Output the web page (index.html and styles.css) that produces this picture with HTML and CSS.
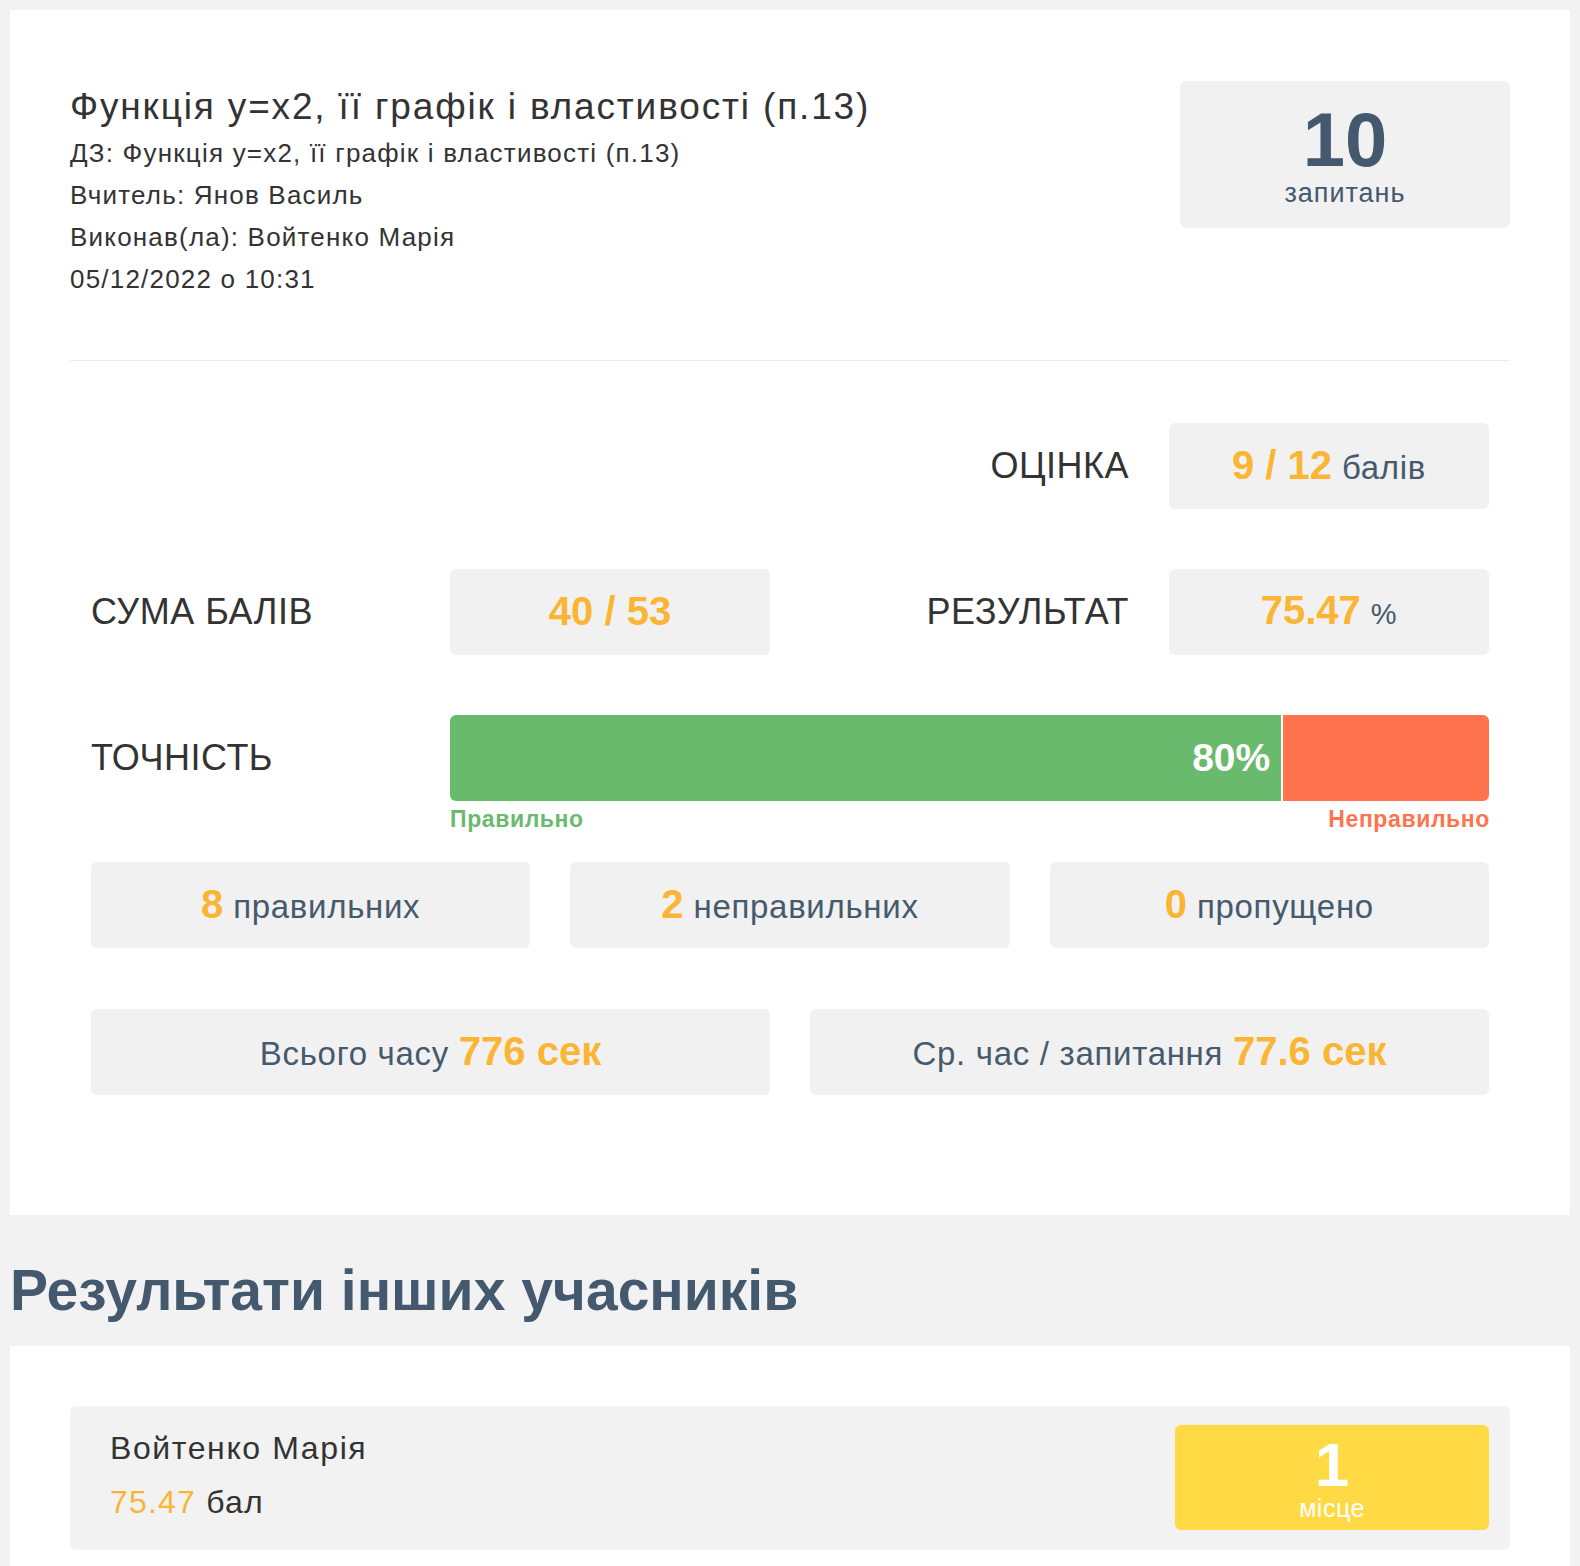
FILE: index.html
```html
<!DOCTYPE html>
<html lang="uk">
<head>
<meta charset="utf-8">
<title>Результат</title>
<link rel="stylesheet" href="styles.css">
</head>
<body>
<div class="card main-card">
  <div class="header">
    <div class="info">
      <h1 class="title">Функція y=x2, її графік і властивості (п.13)</h1>
      <div class="line">ДЗ: Функція y=x2, її графік і властивості (п.13)</div>
      <div class="line">Вчитель: Янов Василь</div>
      <div class="line">Виконав(ла): Войтенко Марія</div>
      <div class="line">05/12/2022 о 10:31</div>
    </div>
    <div class="qbox">
      <div class="qnum">10</div>
      <div class="qlabel">запитань</div>
    </div>
  </div>
  <div class="sep"></div>

  <div class="stats">
    <div class="grid">
      <div class="label right c3">ОЦІНКА</div>
      <div class="box c4"><div class="box-text"><span class="num">9 / 12</span> <span class="unit">балів</span></div></div>

      <div class="label c1">СУМА БАЛІВ</div>
      <div class="box c2"><div class="box-text"><span class="num">40 / 53</span></div></div>
      <div class="label right c3">РЕЗУЛЬТАТ</div>
      <div class="box c4"><div class="box-text"><span class="num">75.47</span> <span class="unit small">%</span></div></div>

      <div class="label c1">ТОЧНІСТЬ</div>
      <div class="barcell">
        <div class="bar">
          <div class="bar-ok" style="width:80%"><span>80%</span></div>
          <div class="bar-bad"></div>
        </div>
        <div class="bar-legend">
          <span class="ok">Правильно</span>
          <span class="bad">Неправильно</span>
        </div>
      </div>
    </div>

    <div class="row3">
      <div class="box"><div class="box-text"><span class="num">8</span> <span class="unit">правильних</span></div></div>
      <div class="box"><div class="box-text"><span class="num">2</span> <span class="unit">неправильних</span></div></div>
      <div class="box"><div class="box-text"><span class="num">0</span> <span class="unit">пропущено</span></div></div>
    </div>

    <div class="row2">
      <div class="box"><div class="box-text"><span class="unit">Всього часу</span> <span class="num">776 сек</span></div></div>
      <div class="box"><div class="box-text"><span class="unit">Ср. час / запитання</span> <span class="num">77.6 сек</span></div></div>
    </div>
  </div>
</div>

<h2 class="section-title">Результати інших учасників</h2>

<div class="card list-card">
  <div class="participant">
    <div class="p-info">
      <div class="p-name">Войтенко Марія</div>
      <div class="p-score"><span class="p-val">75.47</span> бал</div>
    </div>
    <div class="place">
      <div class="place-num">1</div>
      <div class="place-label">місце</div>
    </div>
  </div>
</div>
</body>
</html>
```

FILE: styles.css
```css
* { box-sizing: border-box; }

body {
  margin: 0;
  padding: 10px;
  background: #f2f2f2;
  font-family: "Liberation Sans", Arial, Helvetica, sans-serif;
  color: #333333;
}

.card {
  background: #ffffff;
}

.main-card {
  padding: 71px 60px 120px;
}

.header {
  display: flex;
  justify-content: space-between;
  align-items: flex-start;
}

.title {
  margin: 4px 0 4px;
  font-size: 37px;
  line-height: 43px;
  letter-spacing: 1.85px;
  font-weight: normal;
  color: #333333;
}

.line {
  font-size: 26px;
  line-height: 42px;
  letter-spacing: 1.2px;
  color: #333333;
}

.qbox {
  width: 330px;
  height: 147px;
  padding-top: 6px;
  background: #f1f1f1;
  border-radius: 6px;
  display: flex;
  flex-direction: column;
  align-items: center;
  justify-content: center;
  color: #44596e;
}

.qnum {
  font-size: 76px;
  font-weight: bold;
  line-height: 70px;
}

.qlabel {
  font-size: 27px;
  line-height: 36px;
  letter-spacing: 1px;
}

.sep {
  margin-top: 60px;
  height: 1px;
  background: #ececec;
}

.stats {
  padding: 62px 21px 0;
}

.grid {
  display: grid;
  grid-template-columns: 359px 320px 1fr 320px;
  row-gap: 60px;
  align-items: start;
}

.c1 { grid-column: 1; }
.c2 { grid-column: 2; }
.c3 { grid-column: 3; }
.c4 { grid-column: 4; }

.label {
  height: 86px;
  display: flex;
  align-items: center;
  font-size: 36px;
  letter-spacing: 0.5px;
  color: #333333;
}

.label.right {
  justify-content: flex-end;
  padding-right: 40px;
}

.box {
  height: 86px;
  background: #f1f1f1;
  border-radius: 6px;
  display: flex;
  align-items: center;
  justify-content: center;
  white-space: nowrap;
  font-size: 33px;
  letter-spacing: 0.7px;
}

.box-text {
  line-height: 46px;
}

.num {
  color: #fbb534;
  font-weight: bold;
  font-size: 40px;
  letter-spacing: 0;
}

.unit {
  color: #465a6d;
  font-size: 33px;
  letter-spacing: 0.7px;
}

.unit.small {
  font-size: 29px;
}

.barcell {
  grid-column: 2 / 5;
}

.bar {
  display: flex;
  height: 86px;
  border-radius: 6px;
  overflow: hidden;
  gap: 2px;
}

.bar-ok {
  background: #6aba6e;
  display: flex;
  align-items: center;
  justify-content: flex-end;
  padding-right: 11px;
  color: #ffffff;
  font-weight: bold;
  font-size: 39px;
}

.bar-bad {
  flex: 1;
  background: #ff744f;
}

.bar-legend {
  display: flex;
  justify-content: space-between;
  margin-top: 5px;
  font-size: 23px;
  line-height: 26px;
  letter-spacing: 0.6px;
  font-weight: bold;
}

.bar-legend .ok { color: #6aba6e; }
.bar-legend .bad { color: #ff744f; margin-right: -1px; }

.row3 {
  margin-top: 30px;
  display: grid;
  grid-template-columns: 1fr 1fr 1fr;
  column-gap: 40px;
}

.row2 {
  margin-top: 61px;
  display: grid;
  grid-template-columns: 1fr 1fr;
  column-gap: 40px;
}

.section-title {
  margin: 0;
  padding: 45px 0 26px;
  font-size: 57px;
  line-height: 60px;
  font-weight: bold;
  color: #44596e;
}

.list-card {
  padding: 60px 60px 60px;
}

.participant {
  background: #f2f2f2;
  border-radius: 6px;
  padding: 19px 21px 20px 40px;
  display: flex;
  justify-content: space-between;
  align-items: stretch;
}

.p-name {
  margin-top: 2px;
  font-size: 32px;
  line-height: 42px;
  letter-spacing: 1.6px;
  color: #333333;
}

.p-score {
  margin-top: 12px;
  font-size: 32px;
  line-height: 42px;
  letter-spacing: 1.2px;
  color: #333333;
}

.p-val {
  color: #fbb534;
}

.place {
  width: 314px;
  height: 105px;
  padding-top: 4px;
  background: #ffda44;
  border-radius: 6px;
  color: #ffffff;
  display: flex;
  flex-direction: column;
  align-items: center;
  justify-content: center;
}

.place-num {
  font-size: 62px;
  font-weight: bold;
  line-height: 56px;
}

.place-label {
  font-size: 25px;
  line-height: 30px;
  letter-spacing: 0.5px;
}
```
